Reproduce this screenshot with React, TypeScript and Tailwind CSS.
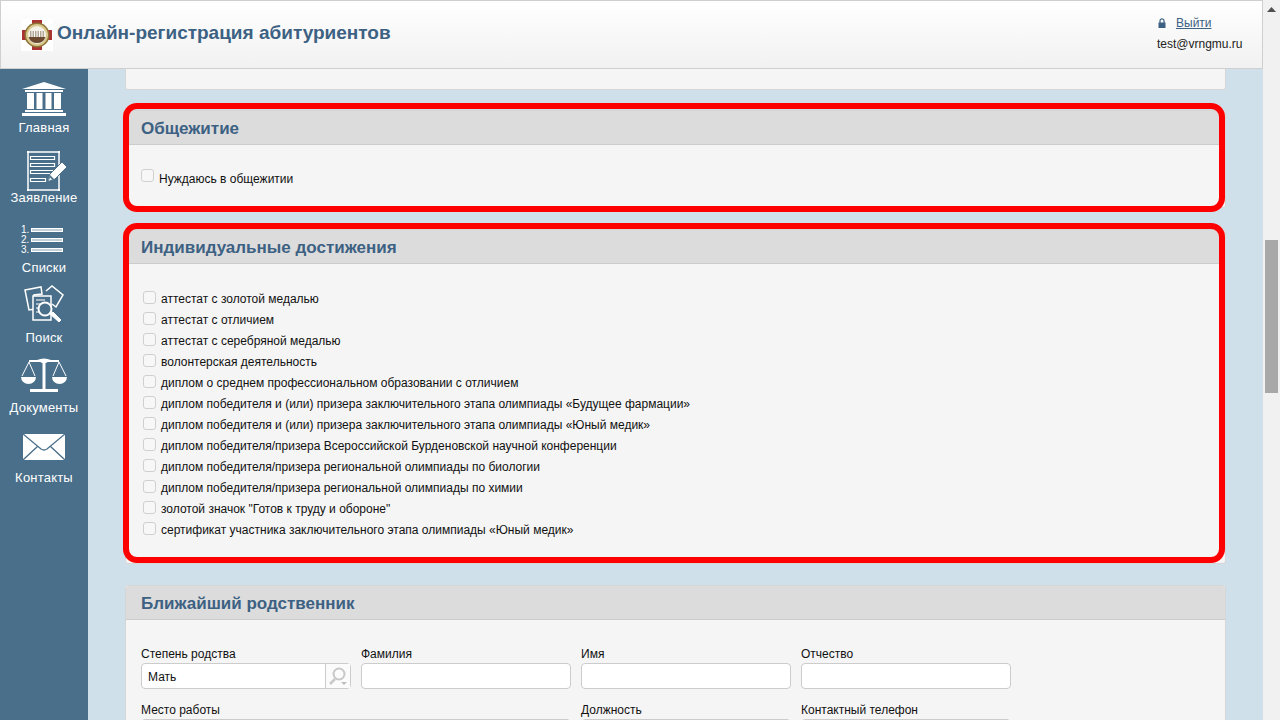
import React from "react";

const items = [
  "аттестат с золотой медалью",
  "аттестат с отличием",
  "аттестат с серебряной медалью",
  "волонтерская деятельность",
  "диплом о среднем профессиональном образовании с отличием",
  "диплом победителя и (или) призера заключительного этапа олимпиады «Будущее фармации»",
  "диплом победителя и (или) призера заключительного этапа олимпиады «Юный медик»",
  "диплом победителя/призера Всероссийской Бурденовской научной конференции",
  "диплом победителя/призера региональной олимпиады по биологии",
  "диплом победителя/призера региональной олимпиады по химии",
  'золотой значок "Готов к труду и обороне"',
  "сертификат участника заключительного этапа олимпиады «Юный медик»",
];

const Logo = () => (
  <svg width="32" height="32" viewBox="0 0 32 32" className="shrink-0 mt-[1px]">
    <rect width="32" height="32" fill="#fff" />
    <rect x="11" y="1" width="10" height="30" fill="#a93232" />
    <rect x="1" y="11" width="30" height="10" fill="#a93232" />
    <circle cx="16" cy="16" r="12.5" fill="#8d7434" />
    <circle cx="16" cy="16" r="11" fill="#d9c98f" />
    <circle cx="16" cy="16" r="9" fill="#f6f1e8" />
    <path d="M9 12h14v6H9z" fill="#b3a594" />
    <path d="M7.5 18h17a9 9 0 0 1-17 0z" fill="#6b4a30" />
    <path d="M11 12v6M13.5 12v6M16 12v6M18.5 12v6M21 12v6" stroke="#fff" strokeWidth="1" />
  </svg>
);

const HomeIcon = () => (
  <svg width="46" height="34" viewBox="0 0 46 34" fill="#fff">
    <path d="M23 0 45 7H1z" />
    <rect x="4" y="8" width="38" height="2" />
    <rect x="6" y="11" width="7" height="16" />
    <rect x="15.5" y="11" width="6" height="16" />
    <rect x="24.5" y="11" width="6" height="16" />
    <rect x="33" y="11" width="7" height="16" />
    <rect x="4" y="28" width="38" height="2" />
    <rect x="1" y="31" width="44" height="3" />
  </svg>
);

const AppIcon = () => (
  <svg width="40" height="40" viewBox="0 0 40 40" fill="none" stroke="#fff" className="ml-[6px] shrink-0">
    <path d="M1 1h31v38H1z" strokeWidth="1.5" />
    <path d="M0 0h2v2H0zM31 0h2v2h-2zM0 38h2v2H0zM31 38h2v2h-2z" fill="#fff" stroke="none" />
    <path d="M3.5 5.5h24v3h-24zM3.5 12.5h24v3h-24zM3.5 19.5h24v3h-24zM3.5 27.5h15v3h-15z" strokeWidth="1.2" />
    <path d="M20 31l3-8 12-12 5 5-12 12z" fill="#fff" stroke="#4a6f8a" strokeWidth="1" />
    <path d="M21 30l2-6 4 4z" fill="#4a6f8a" stroke="none" />
    <path d="M22 29.5l1-3 2 2z" fill="#fff" stroke="none" />
  </svg>
);

const ListIcon = () => (
  <div className="flex flex-col gap-[3px] w-[46px] h-[27px]">
    {["1.", "2.", "3."].map((n) => (
      <div key={n} className="flex items-center h-[7px]">
        <span className="w-[10px] text-[10px] leading-[7px] text-white">{n}</span>
        <span className="w-[32px] h-[4px] bg-[#c3d0da] border border-white" />
      </div>
    ))}
  </div>
);

const SearchDocsIcon = () => (
  <svg width="40" height="40" viewBox="0 0 40 40" fill="none" stroke="#fff" strokeWidth="1.5" className="shrink-0">
    <path d="M1 5l16-3 1 7-8 1 1 14-6 1z" />
    <path d="M22 6l6-5 11 9-7 12-4-3" />
    <path d="M9 11h18v24H9z" fill="#4a6f8a" />
    <path d="M12 15h9M12 19h5M12 23h3M12 27h3" strokeWidth="1.2" />
    <circle cx="21" cy="24" r="6.5" fill="#4a6f8a" strokeWidth="2" />
    <path d="M26 29l9 8 2-2-8-8z" fill="#fff" stroke="#fff" strokeWidth="1" />
  </svg>
);

const ScalesIcon = () => (
  <svg width="46" height="34" viewBox="0 0 46 34" fill="none" stroke="#fff" className="shrink-0">
    <path d="M8 3h30" strokeWidth="2" />
    <path d="M16 2q7-3 14 0l-5 3h-4z" fill="#fff" stroke="none" />
    <rect x="21.5" y="2" width="3" height="29" fill="#fff" stroke="none" />
    <rect x="9" y="31" width="28" height="3" fill="#fff" stroke="none" />
    <path d="M8 4L1 18M8 4l6 14M38 4l-6 14M38 4l7 14" strokeWidth="1" />
    <path d="M0 19h15a7.5 7 0 0 1-15 0zM31 19h15a7.5 7 0 0 1-15 0z" fill="#fff" stroke="none" />
  </svg>
);

const MailIcon = () => (
  <svg width="42" height="26" viewBox="0 0 42 26" className="shrink-0">
    <rect width="42" height="26" fill="#fff" />
    <path d="M0 0l18 15q3 2 6 0L42 0M0 26l15-14M42 26L27 12" fill="none" stroke="#4a6f8a" strokeWidth="1.3" />
  </svg>
);

const nav: { label: string; icon: React.ReactNode; box: string }[] = [
  { label: "Главная", icon: <HomeIcon />, box: "pb-[3px]" },
  { label: "Заявление", icon: <AppIcon />, box: "pb-0" },
  { label: "Списки", icon: <ListIcon />, box: "pb-[2px]" },
  { label: "Поиск", icon: <SearchDocsIcon />, box: "pb-[11px]" },
  { label: "Документы", icon: <ScalesIcon />, box: "pb-[12px]" },
  { label: "Контакты", icon: <MailIcon />, box: "pb-[8px]" },
];

const Box = ({ className = "" }: { className?: string }) => (
  <span className={`block w-[13px] h-[13px] shrink-0 rounded-[3px] border border-[#d0d0d0] bg-[#f7f7f7] ${className}`} />
);

const Card = ({
  title,
  red,
  className,
  children,
}: {
  title: string;
  red?: string;
  className: string;
  children: React.ReactNode;
}) => (
  <section className={`relative w-[1101px] shrink-0 bg-[#f5f5f5] border border-[#d6d6d6] rounded-[3px] ${className}`}>
    <h2 className="h-[34px] pt-[2px] flex items-center pl-[15px] bg-[#dcdcdc] border-b border-[#cccccc] text-[17px] font-bold text-[#3c6183] rounded-t-[3px]">
      {title}
    </h2>
    {children}
    {red && (
      <div className={`absolute -left-[3px] right-0 border-[6px] border-[#ff0000] rounded-[14px] pointer-events-none ${red}`} />
    )}
  </section>
);

const Field = ({ label, w, value, lookup }: { label: string; w: string; value?: string; lookup?: boolean }) => (
  <div className={`${w} shrink-0`}>
    <div className="h-[15px] leading-[15px] mb-[1px] text-[12px] text-[#111]">{label}</div>
    <div className="h-[26px] flex bg-white border border-[#cccccc] rounded-[4px]">
      <div className="flex-1 px-[6px] text-[12px] leading-[26px] text-[#111]">{value}</div>
      {lookup && (
        <div className="w-[25px] border-l border-[#cccccc] flex items-center justify-center bg-[#fbfbfb]">
          <svg width="20" height="20" viewBox="0 0 20 20" fill="none" stroke="#c8c8c8">
            <circle cx="11" cy="8" r="5.5" strokeWidth="2" />
            <path d="M7 13l-5 5" strokeWidth="2.5" />
            <path d="M13 16h6l-3 3z" fill="#bdbdbd" stroke="none" />
          </svg>
        </div>
      )}
    </div>
  </div>
);

export default function App() {
  return (
    <div className="flex w-[1280px] h-[720px] overflow-hidden font-['Liberation_Sans',Arial,sans-serif]">
      <div className="flex flex-col w-[1263px] shrink-0">
        <header className="relative z-10 h-[69px] shrink-0 flex items-center justify-between pl-[20px] bg-gradient-to-b from-white to-[#f1f1f1] border border-[#cfcfcf]">
          <div className="flex items-center gap-[4px]">
            <Logo />
            <h1 className="text-[19px] font-bold text-[#3c6183] mb-[3px]">Онлайн-регистрация абитуриентов</h1>
          </div>
          <div className="w-[105px] text-[12px] mb-[2px]">
            <div className="flex items-center h-[16px] mb-[4px]">
              <svg width="10" height="10" viewBox="0 0 10 10" className="mr-[9px]">
                <path d="M1.5 4.5h7V10h-7z" fill="#3c6183" />
                <path d="M3 5V2.8a2 2 0 0 1 4 0V5" fill="none" stroke="#3c6183" strokeWidth="1.2" />
              </svg>
              <a className="text-[#3c6183] underline">Выйти</a>
            </div>
            <div className="text-[#222]">test@vrngmu.ru</div>
          </div>
        </header>
        <div className="flex flex-1 min-h-0">
          <nav className="w-[88px] shrink-0 bg-[#4a6f8a] pt-[13px] flex flex-col">
            {nav.map(({ label, icon, box }) => (
              <div key={label} className="h-[70px] flex flex-col items-center">
                <div className={`h-[37px] flex items-center justify-center ${box}`}>{icon}</div>
                <div className="text-[13px] leading-[15px] tracking-[0.2px] mt-[1px] text-white">{label}</div>
              </div>
            ))}
          </nav>
          <main className="flex-1 min-w-0 overflow-hidden bg-[#d0e0ea] pl-[37px] flex flex-col">
            <div className="w-[1101px] h-[21px] shrink-0 bg-[#f5f5f5] border border-t-0 border-[#d6d6d6] rounded-b-[3px]" />
            <Card title="Общежитие" red="-top-[8px] -bottom-[5px]" className="h-[98px] mt-[20px]">
              <label className="flex items-start mt-[24px] ml-[15px] text-[12px] text-[#111]">
                <Box />
                <span className="ml-[5px] mt-[3px] leading-[15px]">Нуждаюсь в общежитии</span>
              </label>
            </Card>
            <Card title="Индивидуальные достижения" red="-top-[7px] bottom-0" className="h-[335px] mt-[21px]">
              <ul className="mt-[27px] ml-[17px] flex flex-col gap-[6px]">
                {items.map((t) => (
                  <li key={t} className="flex items-center h-[15px] text-[12px] text-[#111]">
                    <Box className="-mt-[2px]" />
                    <span className="ml-[5px] whitespace-nowrap">{t}</span>
                  </li>
                ))}
              </ul>
            </Card>
            <Card title="Ближайший родственник" className="mt-[21px]">
              <div className="px-[15px] pt-[27px]">
                <div className="flex gap-[10px] mb-[14px]">
                  <Field label="Степень родства" w="w-[210px]" value="Мать" lookup />
                  <Field label="Фамилия" w="w-[210px]" />
                  <Field label="Имя" w="w-[210px]" />
                  <Field label="Отчество" w="w-[210px]" />
                </div>
                <div className="flex gap-[10px]">
                  <Field label="Место работы" w="w-[430px]" />
                  <Field label="Должность" w="w-[210px]" />
                  <Field label="Контактный телефон" w="w-[210px]" />
                </div>
              </div>
            </Card>
          </main>
        </div>
      </div>
      <aside className="w-[17px] shrink-0 bg-[#f1f1f1] flex flex-col items-center">
        <svg width="9" height="5" viewBox="0 0 9 5" className="mt-[7px]">
          <path d="M4.5 0 9 5H0z" fill="#505050" />
        </svg>
        <div className="w-[13px] h-[153px] mt-[228px] bg-[#a8a8a8]" />
      </aside>
    </div>
  );
}
